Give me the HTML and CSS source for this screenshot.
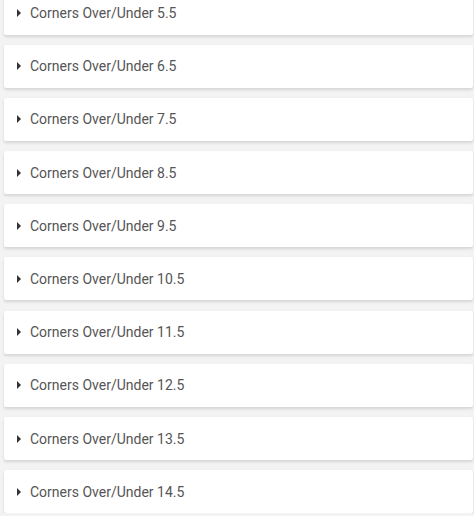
FILE: index.html
```html
<!DOCTYPE html>
<html>
<head>
<meta charset="utf-8">
<link rel="stylesheet" href="styles.css">
</head>
<body>
<div class="list">
  <div class="card"><span class="caret"></span><span class="label">Corners Over/Under 5.5</span></div>
  <div class="card"><span class="caret"></span><span class="label">Corners Over/Under 6.5</span></div>
  <div class="card"><span class="caret"></span><span class="label">Corners Over/Under 7.5</span></div>
  <div class="card"><span class="caret"></span><span class="label">Corners Over/Under 8.5</span></div>
  <div class="card"><span class="caret"></span><span class="label">Corners Over/Under 9.5</span></div>
  <div class="card"><span class="caret"></span><span class="label">Corners Over/Under 10.5</span></div>
  <div class="card"><span class="caret"></span><span class="label">Corners Over/Under 11.5</span></div>
  <div class="card"><span class="caret"></span><span class="label">Corners Over/Under 12.5</span></div>
  <div class="card"><span class="caret"></span><span class="label">Corners Over/Under 13.5</span></div>
  <div class="card"><span class="caret"></span><span class="label">Corners Over/Under 14.5</span></div>
</div>
</body>
</html>
```
FILE: styles.css
```css
html, body {
  margin: 0;
  padding: 0;
  background: #f3f3f3;
  overflow: hidden;
}
.list {
  display: flex;
  flex-direction: column;
  gap: 10.2px;
  margin-top: -8.5px;
  padding: 0 1px 0 4px;
}
.card {
  height: 43px;
  background: #fff;
  border-radius: 2px;
  box-shadow: 0 2px 3px rgba(0,0,0,0.12), 0 0 1px rgba(0,0,0,0.06);
  display: flex;
  align-items: center;
  padding-left: 13px;
  box-sizing: border-box;
  font-family: Roboto, "Liberation Sans", sans-serif;
  font-size: 14px;
  color: #555;
}
.caret {
  width: 0;
  height: 0;
  border-top: 4px solid transparent;
  border-bottom: 4px solid transparent;
  border-left: 4px solid #333;
  margin-right: 9px;
}
```
